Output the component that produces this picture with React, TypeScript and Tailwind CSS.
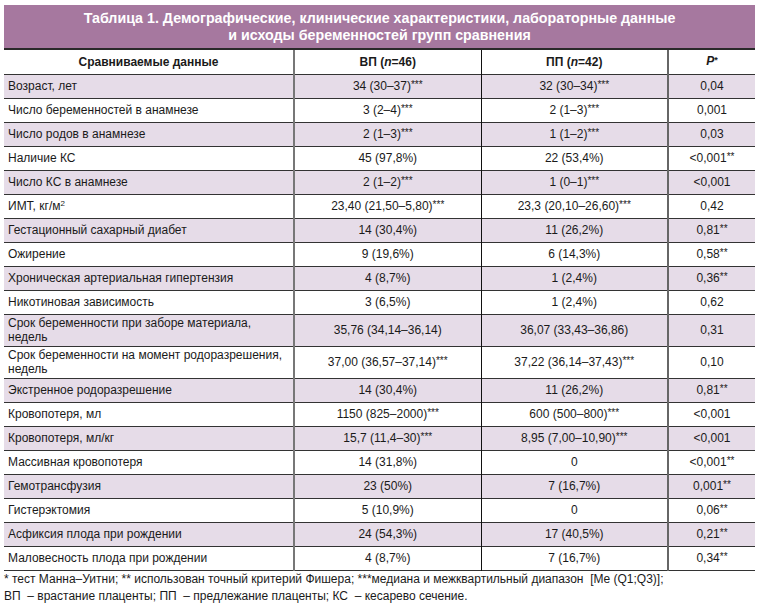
import React from "react";

type Row = { label: React.ReactNode; a: string; b: string; p: string; tall?: boolean };

const rows: Row[] = [
  { label: "Возраст, лет", a: "34 (30–37)***", b: "32 (30–34)***", p: "0,04" },
  { label: "Число беременностей в анамнезе", a: "3 (2–4)***", b: "2 (1–3)***", p: "0,001" },
  { label: "Число родов в анамнезе", a: "2 (1–3)***", b: "1 (1–2)***", p: "0,03" },
  { label: "Наличие КС", a: "45 (97,8%)", b: "22 (53,4%)", p: "<0,001**" },
  { label: "Число КС в анамнезе", a: "2 (1–2)***", b: "1 (0–1)***", p: "<0,001" },
  {
    label: (
      <>
        ИМТ, кг/м<sup className="text-[8px]">2</sup>
      </>
    ),
    a: "23,40 (21,50–5,80)***",
    b: "23,3 (20,10–26,60)***",
    p: "0,42",
  },
  { label: "Гестационный сахарный диабет", a: "14 (30,4%)", b: "11 (26,2%)", p: "0,81**" },
  { label: "Ожирение", a: "9 (19,6%)", b: "6 (14,3%)", p: "0,58**" },
  { label: "Хроническая артериальная гипертензия", a: "4 (8,7%)", b: "1 (2,4%)", p: "0,36**" },
  { label: "Никотиновая зависимость", a: "3 (6,5%)", b: "1 (2,4%)", p: "0,62" },
  {
    label: (
      <>
        Срок беременности при заборе материала,
        <br />
        недель
      </>
    ),
    a: "35,76 (34,14–36,14)",
    b: "36,07 (33,43–36,86)",
    p: "0,31",
    tall: true,
  },
  {
    label: (
      <>
        Срок беременности на момент родоразрешения,
        <br />
        недель
      </>
    ),
    a: "37,00 (36,57–37,14)***",
    b: "37,22 (36,14–37,43)***",
    p: "0,10",
    tall: true,
  },
  { label: "Экстренное родоразрешение", a: "14 (30,4%)", b: "11 (26,2%)", p: "0,81**" },
  { label: "Кровопотеря, мл", a: "1150 (825–2000)***", b: "600 (500–800)***", p: "<0,001" },
  { label: "Кровопотеря, мл/кг", a: "15,7 (11,4–30)***", b: "8,95 (7,00–10,90)***", p: "<0,001" },
  { label: "Массивная кровопотеря", a: "14 (31,8%)", b: "0", p: "<0,001**" },
  { label: "Гемотрансфузия", a: "23 (50%)", b: "7 (16,7%)", p: "0,001**" },
  { label: "Гистерэктомия", a: "5 (10,9%)", b: "0", p: "0,06**" },
  { label: "Асфиксия плода при рождении", a: "24 (54,3%)", b: "17 (40,5%)", p: "0,21**" },
  { label: "Маловесность плода при рождении", a: "4 (8,7%)", b: "7 (16,7%)", p: "0,34**" },
];

function Val({ s }: { s: string }) {
  const m = s.match(/^(.*?)(\*+)$/);
  if (!m) return <>{s}</>;
  return (
    <>
      {m[1]}
      <span className="text-[10px] relative -top-[2px]">{m[2]}</span>
    </>
  );
}

export default function App() {
  return (
    <div
      className="bg-white w-[761px] h-[607px] pl-[4px] pt-[5px] text-[#1a1a1a]"
      style={{ fontFamily: '"Liberation Sans", Arial, sans-serif' }}
    >
      <div className="w-[751px]">
        <div className="bg-[#a6789f] text-white font-bold text-[14.25px] leading-[17px] text-center pt-[5px] pb-[4px] border-b-[2px] border-[#2a2a2a]">
          Таблица 1. Демографические, клинические характеристики, лабораторные данные
          <br />
          и исходы беременностей групп сравнения
        </div>
        <table className="w-[751px] table-fixed text-[12px] leading-[14px]">
          <colgroup>
            <col className="w-[290px]" />
            <col className="w-[187px]" />
            <col className="w-[187px]" />
            <col className="w-[87px]" />
          </colgroup>
          <thead>
            <tr className="h-[24px] bg-white border-b border-[#333]">
              <th className="font-bold text-center align-middle">Сравниваемые данные</th>
              <th className="font-bold text-center align-middle border-l-[2px] border-[#777]">
                ВП (<i>n</i>=46)
              </th>
              <th className="font-bold text-center align-middle border-l border-[#111]">
                ПП (<i>n</i>=42)
              </th>
              <th className="font-bold text-center align-middle border-l-[2px] border-[#666]">
                <i>P</i>
                <span className="text-[9px] relative -top-[2px]">*</span>
              </th>
            </tr>
          </thead>
          <tbody>
            {rows.map((r, i) => (
              <tr
                key={i}
                className={
                  (r.tall ? "h-[32px] " : "h-[24px] ") +
                  (i % 2 === 0 ? "bg-[#e6dce8] " : "bg-white ") +
                  "border-b border-[#333]"
                }
              >
                <td className="pl-[4px] align-middle">{r.label}</td>
                <td className="text-center align-middle border-l-[2px] border-[#777]">
                  <Val s={r.a} />
                </td>
                <td className="text-center align-middle border-l border-[#111]">
                  <Val s={r.b} />
                </td>
                <td className="text-center align-middle border-l-[2px] border-[#666]">
                  <Val s={r.p} />
                </td>
              </tr>
            ))}
          </tbody>
        </table>
        <div className="text-[12px] leading-[17px]">
          <div>
            * тест Манна–Уитни; ** использован точный критерий Фишера; ***медиана и межквартильный диапазон&nbsp; [Me (Q1;Q3)];
          </div>
          <div>ВП&nbsp; – врастание плаценты; ПП&nbsp; – предлежание плаценты; КС&nbsp; – кесарево сечение.</div>
        </div>
      </div>
    </div>
  );
}
